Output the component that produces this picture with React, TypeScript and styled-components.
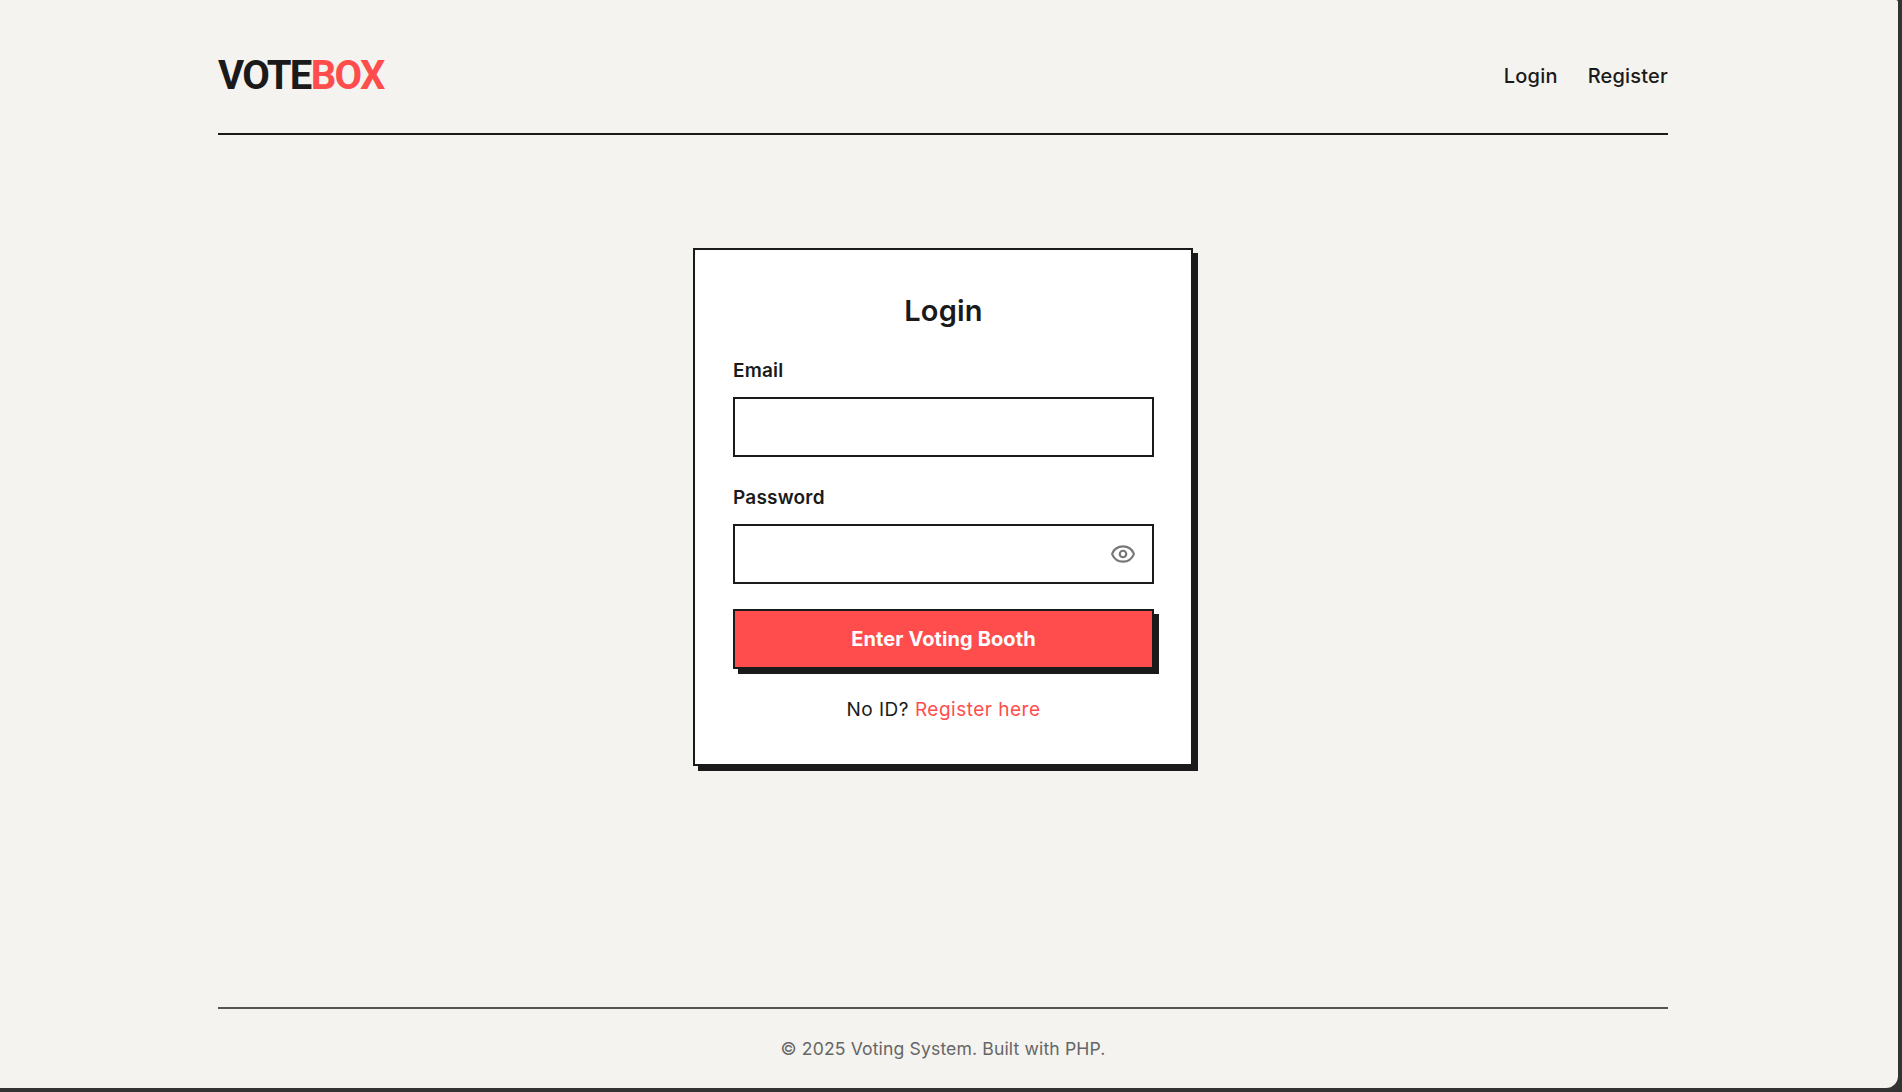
import { Eye } from "lucide-react";
import styled, { createGlobalStyle } from "styled-components";

const GlobalStyle = createGlobalStyle`
  html, body {
    margin: 0;
    padding: 0;
    background: #333333;
  }
  * {
    box-sizing: border-box;
  }
`;

function App() {
  return (
    <>
      <GlobalStyle />
      <Page>
        <Wrapper>
          <Header>
            <Logo>
              VOTE<LogoAccent>BOX</LogoAccent>
            </Logo>
            <Nav>
              <NavLink href="#">Login</NavLink>
              <NavLink href="#">Register</NavLink>
            </Nav>
          </Header>
          <Main>
            <Card>
              <Title>Login</Title>
              <Field $gap={29}>
                <Label htmlFor="email">Email</Label>
                <Input id="email" type="email" />
              </Field>
              <Field $gap={25}>
                <Label htmlFor="password">Password</Label>
                <PasswordBox>
                  <Input id="password" type="password" />
                  <EyeButton type="button" aria-label="Show password">
                    <Eye size={26} strokeWidth={2} />
                  </EyeButton>
                </PasswordBox>
              </Field>
              <Submit type="submit">Enter Voting Booth</Submit>
              <Switch>
                No ID? <SwitchLink href="#">Register here</SwitchLink>
              </Switch>
            </Card>
          </Main>
          <Footer>© 2025 Voting System. Built with PHP.</Footer>
        </Wrapper>
      </Page>
    </>
  );
}

export default App;

const Page = styled.div`
  width: 1898px;
  height: 1088px;
  background: #f4f3ef;
  border-bottom-right-radius: 12px;
  border-top-right-radius: 2px;
  font-family: Inter, "Liberation Sans", sans-serif;
  color: #1a1a1a;
`;

const Wrapper = styled.div`
  width: 1450px;
  height: 100%;
  margin-left: 218px;
  display: flex;
  flex-direction: column;
`;

const Header = styled.header`
  height: 135px;
  flex: none;
  display: flex;
  justify-content: space-between;
  align-items: center;
  padding-top: 19px;
  border-bottom: 2px solid #1a1a1a;
`;

const Logo = styled.div`
  font-family: Roboto, sans-serif;
  font-size: 40px;
  font-weight: 700;
  letter-spacing: -1.7px;
  line-height: 1;
`;

const LogoAccent = styled.span`
  color: #ff4d4d;
`;

const Nav = styled.nav`
  display: flex;
  gap: 30px;
`;

const NavLink = styled.a`
  font-size: 20px;
  font-weight: 500;
  letter-spacing: 0.2px;
  color: #1a1a1a;
  text-decoration: none;
`;

const Main = styled.main`
  flex: 1;
  display: flex;
  justify-content: center;
  align-items: flex-start;
  padding-top: 113px;
`;

const Card = styled.form`
  width: 500px;
  height: 518px;
  padding: 43px 37px 0 38px;
  background: #fff;
  border: 2px solid #1a1a1a;
  box-shadow: 5px 5px 0 #1a1a1a;
`;

const Title = styled.h2`
  margin: 0 0 30px;
  font-size: 29px;
  font-weight: 600;
  letter-spacing: 0.2px;
  line-height: 36px;
  text-align: center;
`;

const Field = styled.div<{ $gap: number }>`
  margin-bottom: ${(props) => props.$gap}px;
`;

const Label = styled.label`
  display: block;
  margin-bottom: 14px;
  font-size: 19px;
  font-weight: 600;
  letter-spacing: 0.2px;
  line-height: 24px;
`;

const Input = styled.input`
  display: block;
  width: 100%;
  height: 60px;
  padding: 0 16px;
  background: #fff;
  border: 2px solid #1a1a1a;
  border-radius: 0;
  outline: none;
  font: inherit;
`;

const PasswordBox = styled.div`
  position: relative;
`;

const EyeButton = styled.button`
  position: absolute;
  top: 17px;
  right: 18px;
  display: flex;
  padding: 0;
  background: none;
  border: 0;
  color: #777;
`;

const Submit = styled.button`
  display: block;
  width: 100%;
  height: 60px;
  background: #ff4d4d;
  border: 2px solid #1a1a1a;
  border-radius: 0;
  box-shadow: 5px 5px 0 #1a1a1a;
  color: #fff;
  font-family: inherit;
  font-size: 20px;
  font-weight: 700;
  letter-spacing: 0.1px;
`;

const Switch = styled.p`
  margin: 29px 0 0;
  font-size: 19px;
  letter-spacing: 0.5px;
  line-height: 24px;
  text-align: center;
`;

const SwitchLink = styled.a`
  color: #ff4d4d;
  text-decoration: none;
`;

const Footer = styled.footer`
  height: 81px;
  flex: none;
  display: flex;
  justify-content: center;
  align-items: center;
  border-top: 2px solid #555;
  font-size: 17.6px;
  letter-spacing: 0.13px;
  color: #666;
`;
